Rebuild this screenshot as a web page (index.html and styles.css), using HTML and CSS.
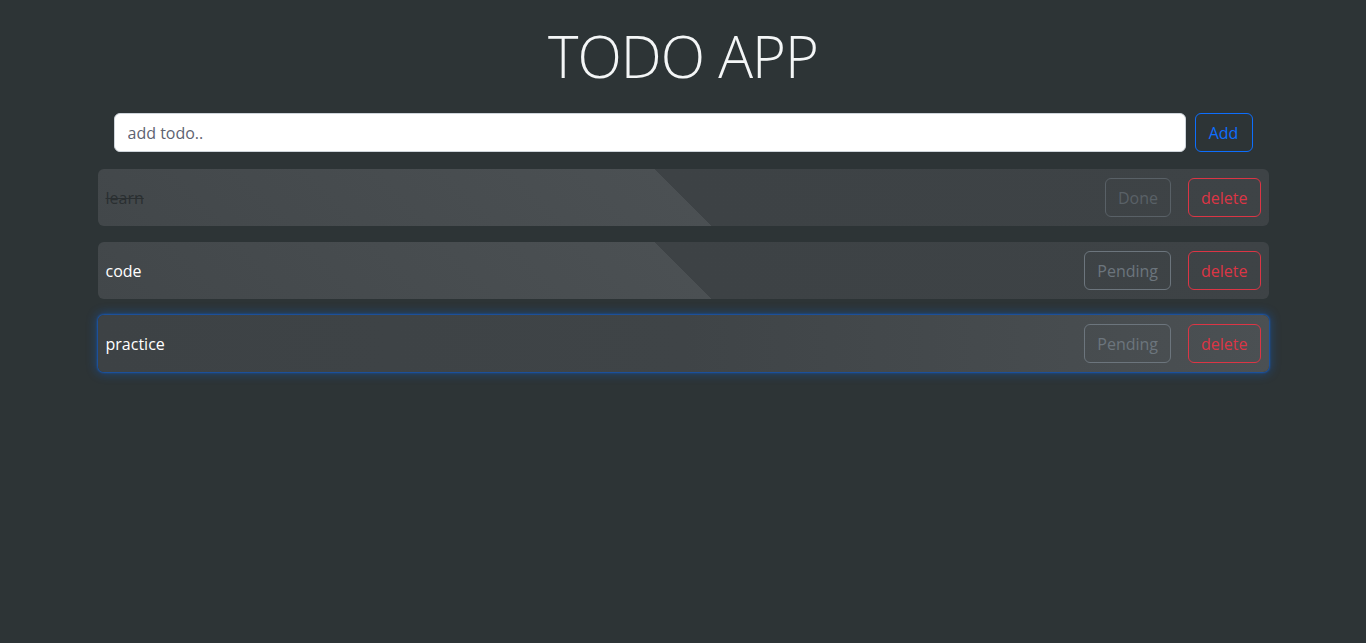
FILE: index.html
```html
<!DOCTYPE html>
<html>
<head>
<meta charset="utf-8">
<link rel="stylesheet" href="styles.css">
</head>
<body>
<div class="app">
  <h1 class="title">TODO APP</h1>
  <form class="add-row">
    <input class="add-input" type="text" placeholder="add todo..">
    <button class="btn btn-primary" type="button">Add</button>
  </form>
  <ul class="list">
    <li class="todo">
      <span class="todo-text done-text">learn</span>
      <div class="actions">
        <button class="btn btn-secondary disabled" type="button">Done</button>
        <button class="btn btn-danger" type="button">delete</button>
      </div>
    </li>
    <li class="todo">
      <span class="todo-text">code</span>
      <div class="actions">
        <button class="btn btn-secondary" type="button">Pending</button>
        <button class="btn btn-danger" type="button">delete</button>
      </div>
    </li>
    <li class="todo todo-hover">
      <span class="todo-text">practice</span>
      <div class="actions">
        <button class="btn btn-secondary" type="button">Pending</button>
        <button class="btn btn-danger" type="button">delete</button>
      </div>
    </li>
  </ul>
</div>
</body>
</html>
```
FILE: styles.css
```css
* { box-sizing: border-box; }
html, body { margin: 0; padding: 0; }
body {
  background: #2d3436;
  font-family: "Open Sans", "Noto Sans", sans-serif;
  color: #fff;
  height: 643px;
}
.app {
  width: 1171px;
  margin: 0 auto;
  padding-top: 20px;
}
.title {
  margin: 0;
  text-align: center;
  font-weight: 300;
  font-size: 58px;
  line-height: 72px;
  letter-spacing: -1px;
  color: #f4f6f7;
}
.add-row {
  display: flex;
  gap: 9px;
  padding: 0 16px;
  margin: 21px 0 17px;
}
.add-input {
  flex: 1;
  height: 39px;
  border: 1px solid #ced4da;
  border-radius: 6px;
  padding: 0 13px;
  font-family: inherit;
  font-size: 16px;
  color: #212529;
  background: #fff;
  outline: none;
}
.add-input::placeholder { color: #5d6371; }
.btn {
  font-family: inherit;
  font-size: 16px;
  background: transparent;
  border: 1px solid;
  border-radius: 6px;
  padding: 0 12px;
  height: 39px;
  cursor: pointer;
}
.btn-primary { color: #0d6efd; border-color: #0d6efd; width: 58px; }
.btn-secondary { color: #6c757d; border-color: #6c757d; }
.btn-secondary.disabled { opacity: .6; }
.btn-danger { color: #dc3545; border-color: #dc3545; }
.list {
  list-style: none;
  margin: 0;
  padding: 0;
  display: flex;
  flex-direction: column;
  gap: 16px;
}
.todo {
  height: 57px;
  display: flex;
  align-items: center;
  justify-content: space-between;
  padding: 0 8px;
  border-radius: 6px;
  background: linear-gradient(45deg, #42474a 0%, #4b5053 50%, #3d4245 50%, #3e4346 100%);
}
.todo-hover {
  background: linear-gradient(90deg, #3d4245 0%, #3f4447 50%, #4b5053 100%);
  box-shadow: 0 0 2px 1px rgba(13, 110, 253, 0.55), 0 0 10px 3px rgba(13, 110, 253, 0.25);
}
.todo-text { font-size: 16px; color: #fff; }
.done-text { color: #2a2f31; text-decoration: line-through; }
.actions { display: flex; gap: 17px; }
```
